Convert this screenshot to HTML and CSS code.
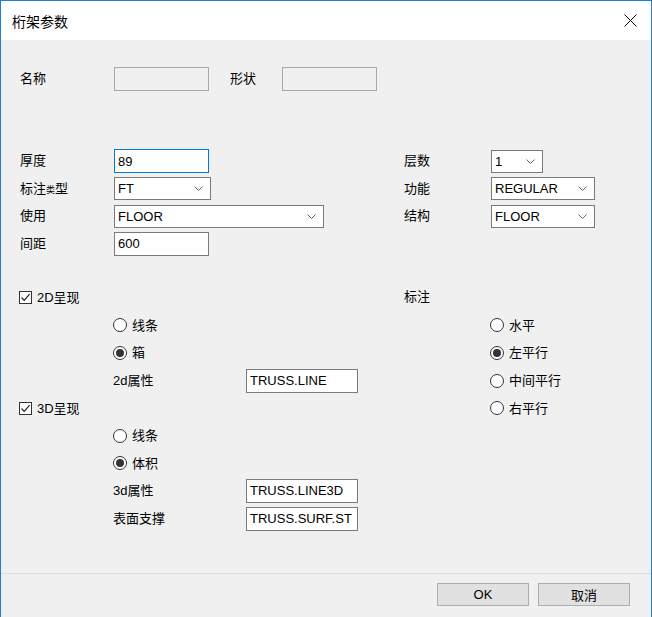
FILE: index.html
```html
<!DOCTYPE html>
<html>
<head>
<meta charset="utf-8">
<link rel="stylesheet" href="styles.css">
</head>
<body>
<div class="window">
  <div class="titlebar">
    <span class="title">桁架参数</span>
    <span class="close"><svg width="13" height="13" viewBox="0 0 13 13"><path d="M0.5 0.5 L12.5 12.5 M12.5 0.5 L0.5 12.5" stroke="#000" stroke-width="1" fill="none"/></svg></span>
  </div>
  <div class="body">
    <div class="row-top">
      <span class="lbl w94">名称</span><span class="field disabled w95"></span>
      <span class="lbl gap-shape">形状</span><span class="field disabled w95"></span>
    </div>
    <div class="upper">
      <div class="col-left">
        <div class="frow"><span class="lbl w94">厚度</span><span class="field focus w95">89</span></div>
        <div class="frow"><span class="lbl w94">标注<span class="tiny">类</span>型</span><span class="field select w97">FT<svg class="chev" width="9" height="5" viewBox="0 0 9 5"><path d="M0.5 0.5 L4.5 4.5 L8.5 0.5" stroke="#666" fill="none"/></svg></span></div>
        <div class="frow"><span class="lbl w94">使用</span><span class="field select w210">FLOOR<svg class="chev" width="9" height="5" viewBox="0 0 9 5"><path d="M0.5 0.5 L4.5 4.5 L8.5 0.5" stroke="#666" fill="none"/></svg></span></div>
        <div class="frow"><span class="lbl w94">间距</span><span class="field w95">600</span></div>
      </div>
      <div class="col-right">
        <div class="frow"><span class="lbl w87">层数</span><span class="field select w52">1<svg class="chev" width="9" height="5" viewBox="0 0 9 5"><path d="M0.5 0.5 L4.5 4.5 L8.5 0.5" stroke="#666" fill="none"/></svg></span></div>
        <div class="frow"><span class="lbl w87">功能</span><span class="field select w104">REGULAR<svg class="chev" width="9" height="5" viewBox="0 0 9 5"><path d="M0.5 0.5 L4.5 4.5 L8.5 0.5" stroke="#666" fill="none"/></svg></span></div>
        <div class="frow"><span class="lbl w87">结构</span><span class="field select w104">FLOOR<svg class="chev" width="9" height="5" viewBox="0 0 9 5"><path d="M0.5 0.5 L4.5 4.5 L8.5 0.5" stroke="#666" fill="none"/></svg></span></div>
      </div>
    </div>
    <div class="lower">
      <div class="lower-left">
        <div class="lrow first"><span class="check"><svg width="11" height="11" viewBox="0 0 11 11"><path d="M1.5 5.5 L4.2 8.3 L9.6 2.2" stroke="#222" stroke-width="1.2" fill="none"/></svg></span><span class="clbl">2D呈现</span></div>
        <div class="lrow indent"><span class="radio"></span><span class="rlbl">线条</span></div>
        <div class="lrow indent"><span class="radio on"></span><span class="rlbl">箱</span></div>
        <div class="lrow indent"><span class="lbl w133">2d属性</span><span class="field w112">TRUSS.LINE</span></div>
        <div class="lrow"><span class="check"><svg width="11" height="11" viewBox="0 0 11 11"><path d="M1.5 5.5 L4.2 8.3 L9.6 2.2" stroke="#222" stroke-width="1.2" fill="none"/></svg></span><span class="clbl">3D呈现</span></div>
        <div class="lrow indent"><span class="radio"></span><span class="rlbl">线条</span></div>
        <div class="lrow indent"><span class="radio on"></span><span class="rlbl">体积</span></div>
        <div class="lrow indent"><span class="lbl w133">3d属性</span><span class="field w112">TRUSS.LINE3D</span></div>
        <div class="lrow indent"><span class="lbl w133">表面支撑</span><span class="field w112">TRUSS.SURF.ST</span></div>
      </div>
      <div class="lower-right">
        <div class="lrow first"><span class="lbl">标注</span></div>
        <div class="lrow indent-r"><span class="radio"></span><span class="rlbl">水平</span></div>
        <div class="lrow indent-r"><span class="radio on"></span><span class="rlbl">左平行</span></div>
        <div class="lrow indent-r"><span class="radio"></span><span class="rlbl">中间平行</span></div>
        <div class="lrow indent-r"><span class="radio"></span><span class="rlbl">右平行</span></div>
      </div>
    </div>
  </div>
  <div class="footer">
    <button class="btn">OK</button>
    <button class="btn">取消</button>
  </div>
</div>
</body>
</html>
```

FILE: styles.css
```css
* { box-sizing: border-box; margin: 0; padding: 0; }
html, body { width: 652px; height: 617px; overflow: hidden; background: #f0f0f0; }
body {
  font-family: "Liberation Sans", "Noto Sans CJK SC", sans-serif;
  font-size: 13px;
  color: #000;
}
.window {
  width: 652px;
  height: 617px;
  border: 1px solid #1b7fd6;
  border-bottom: none;
  display: flex;
  flex-direction: column;
  background: #f0f0f0;
}
.titlebar {
  height: 39px;
  flex: none;
  background: #fff;
  display: flex;
  align-items: center;
  justify-content: space-between;
  padding: 0 14px 0 11px;
  font-size: 14px;
}
.close { display: flex; }
.body {
  height: 533px;
  flex: none;
  padding: 27px 0 0 19px;
}
.row-top { display: flex; align-items: center; height: 24px; }
.lbl { display: inline-block; white-space: nowrap; margin-bottom: 3px; }
.w94 { width: 94px; }
.w87 { width: 87px; }
.w133 { width: 133px; }
.gap-shape { margin-left: 21px; width: 52px; }
.tiny { font-size: 9px; }
.field {
  display: flex;
  align-items: center;
  height: 24px;
  background: #fff;
  border: 1px solid #7a7a7a;
  padding-left: 3px;
  white-space: nowrap;
  overflow: hidden;
}
.field.disabled { background: #f0f0f0; border-color: #a8a8a8; }
.field.focus { border-color: #0078d7; }
.field.select { height: 23px; }
.chev { margin-left: auto; margin-right: 7px; flex: none; }
.w95 { width: 95px; }
.w97 { width: 97px; }
.w210 { width: 210px; }
.w52 { width: 52px; }
.w104 { width: 104px; }
.w112 { width: 112px; }
.upper { display: flex; margin-top: 58px; }
.col-left { width: 384px; display: flex; flex-direction: column; gap: 3.67px; }
.col-right { display: flex; flex-direction: column; gap: 3.67px; }
.frow { display: flex; align-items: center; height: 24px; }
.lower { display: flex; margin-top: 27.2px; }
.lower-left { width: 384px; }
.lrow { display: flex; align-items: center; height: 27.6px; }
.lrow.first { height: 28.4px; }
.indent { padding-left: 93px; }
.indent-r { padding-left: 86px; }
.check {
  width: 13px;
  height: 13px;
  margin-left: -1px;
  border: 1px solid #333;
  background: #fff;
  display: flex;
  align-items: center;
  justify-content: center;
}
.clbl { margin-left: 5px; margin-bottom: 2px; }
.radio {
  width: 14px;
  height: 14px;
  border: 1px solid #333;
  border-radius: 50%;
  background: #fff;
  display: flex;
  align-items: center;
  justify-content: center;
  flex: none;
}
.radio.on::after {
  content: "";
  width: 8px;
  height: 8px;
  border-radius: 50%;
  background: #333;
}
.rlbl { margin-left: 5px; margin-bottom: 2px; }
.footer {
  flex: 1;
  border-top: 1px solid #dcdcdc;
  display: flex;
  justify-content: flex-end;
  align-items: flex-start;
  gap: 9px;
  padding: 9px 21px 0 0;
}
.btn {
  width: 92px;
  height: 23px;
  background: #e1e1e1;
  border: 1px solid #adadad;
  font-family: "Liberation Sans", "Noto Sans CJK SC", sans-serif;
  font-size: 13px;
  color: #000;
}
```
